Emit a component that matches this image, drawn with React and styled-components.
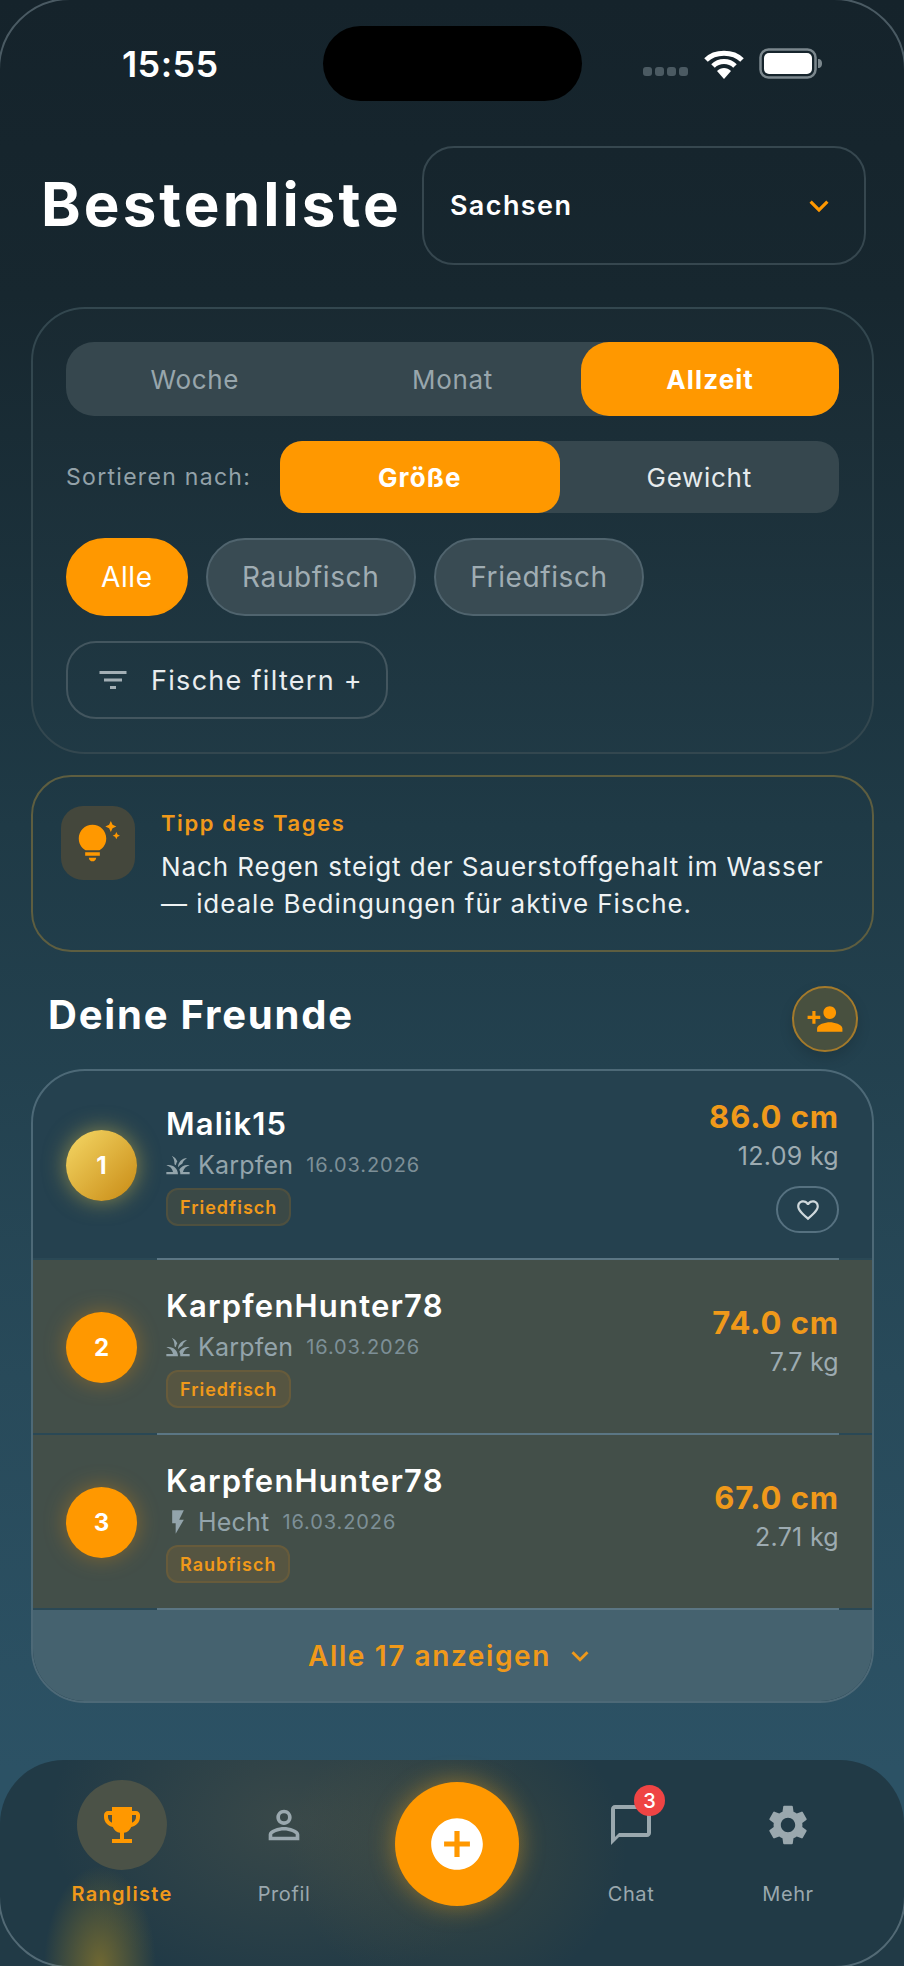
import React from "react";
import styled, { createGlobalStyle } from "styled-components";
import {
  MdAddCircle,
  MdChatBubbleOutline,
  MdEmojiEvents,
  MdFavoriteBorder,
  MdFilterList,
  MdFlashOn,
  MdGrass,
  MdKeyboardArrowDown,
  MdPersonAddAlt1,
  MdPersonOutline,
  MdSettings,
  MdTipsAndUpdates,
} from "react-icons/md";

const ORANGE = "#ff9800";

const friends = [
  { rank: 1, name: "Malik15", Icon: MdGrass, fish: "Karpfen", date: "16.03.2026", tag: "Friedfisch", size: "86.0 cm", weight: "12.09 kg", first: true },
  { rank: 2, name: "KarpfenHunter78", Icon: MdGrass, fish: "Karpfen", date: "16.03.2026", tag: "Friedfisch", size: "74.0 cm", weight: "7.7 kg" },
  { rank: 3, name: "KarpfenHunter78", Icon: MdFlashOn, fish: "Hecht", date: "16.03.2026", tag: "Raubfisch", size: "67.0 cm", weight: "2.71 kg" },
];

const GlobalStyle = createGlobalStyle`
  html, body {
    margin: 0;
    padding: 0;
  }
  body {
    background: #15232b;
    font-family: Inter, "Noto Sans", sans-serif;
    color: #fff;
  }
  * {
    box-sizing: border-box;
  }
`;

const Phone = styled.div`
  position: relative;
  width: 904px;
  height: 1966px;
  overflow: hidden;
  background: linear-gradient(180deg, #15232b 0%, #17272f 15%, #1f3a46 42%, #284a5a 70%, #2c5265 90%);

  &::after {
    content: "";
    position: absolute;
    inset: -2px;
    border: 2px solid rgba(200, 220, 230, 0.3);
    border-radius: 72px;
    pointer-events: none;
  }
`;

const StatusBar = styled.div`
  display: grid;
  grid-template-columns: 323px 259px 1fr;
  align-items: center;
  height: 75px;
  margin-top: 26px;
`;

const Time = styled.div`
  padding-left: 122px;
  font-size: 36px;
  font-weight: 600;
  letter-spacing: 0.4px;
`;

const Island = styled.div`
  height: 75px;
  border-radius: 38px;
  background: #000;
`;

const StatusIcons = styled.div`
  display: flex;
  align-items: center;
  padding-left: 61px;
`;

const SignalDot = styled.span`
  width: 9px;
  height: 9px;
  margin-right: 3px;
  margin-top: 16px;
  border-radius: 3px;
  background: #4b5a62;
`;

const Wifi = styled.svg`
  width: 42px;
  height: 32px;
  margin: 0 14px 0 12px;
`;

const Battery = styled.svg`
  width: 64px;
  height: 31px;
`;

const Header = styled.div`
  display: flex;
  align-items: center;
  gap: 20px;
  margin-top: 45px;
  padding: 0 38px 0 41px;
`;

const Title = styled.h1`
  margin: 0 0 4px;
  font-size: 60px;
  font-weight: 700;
  letter-spacing: 3.1px;
  white-space: nowrap;
`;

const Select = styled.div`
  flex: 1;
  display: flex;
  align-items: center;
  justify-content: space-between;
  height: 119px;
  padding: 0 26px 0 26px;
  border: 2px solid #36474f;
  border-radius: 32px;
  font-size: 27px;
  font-weight: 600;
  letter-spacing: 1.4px;
`;

const Main = styled.main`
  display: flex;
  flex-direction: column;
  margin-top: 42px;
  padding: 0 30px 0 31px;
`;

const FilterCard = styled.section`
  display: flex;
  flex-direction: column;
  align-items: flex-start;
  height: 447px;
  padding: 33px 33px 0;
  border: 2px solid #33474f;
  border-radius: 54px;
  background: rgba(255, 255, 255, 0.012);
`;

const Segment = styled.div`
  display: flex;
  flex: ${(p) => (p.$grow ? 1 : "none")};
  width: 100%;
  height: ${(p) => p.$height}px;
  border-radius: ${(p) => p.$radius}px;
  background: #36474e;
`;

const SegmentOption = styled.div`
  flex: 1;
  display: flex;
  align-items: center;
  justify-content: center;
  border-radius: inherit;
  font-size: 26px;
  letter-spacing: ${(p) => (p.$active ? 1.1 : 0.7)}px;
  font-weight: ${(p) => (p.$active ? 700 : 400)};
  color: ${(p) => (p.$active ? "#fff" : p.$muted ? "#98a6ac" : "#e6ebed")};
  background: ${(p) => (p.$active ? ORANGE : "transparent")};
`;

const SortRow = styled.div`
  display: flex;
  align-items: center;
  width: 100%;
  margin-top: 25px;
`;

const SortLabel = styled.span`
  width: 214px;
  font-size: 23px;
  letter-spacing: 1.3px;
  color: #93a2a9;
  white-space: nowrap;
`;

const ChipRow = styled.div`
  display: flex;
  gap: 18px;
  margin-top: 25px;
`;

const Chip = styled.div`
  display: flex;
  align-items: center;
  height: 78px;
  padding: 0 ${(p) => (p.$active ? 33 : 34.5)}px;
  border-radius: 39px;
  border: 2px solid ${(p) => (p.$active ? ORANGE : "#50646e")};
  background: ${(p) => (p.$active ? ORANGE : "#394b53")};
  color: ${(p) => (p.$active ? "#fff" : "#a0adb3")};
  font-size: 28px;
  letter-spacing: 0.6px;
`;

const FilterButton = styled.div`
  display: flex;
  align-items: center;
  gap: 20px;
  height: 78px;
  margin-top: 25px;
  padding: 0 23px 0 27px;
  border: 2px solid #43565f;
  border-radius: 30px;
  font-size: 27px;
  letter-spacing: 1.3px;
  color: #e9edef;

  svg {
    color: #a3afb5;
  }
`;

const TipCard = styled.section`
  display: flex;
  gap: 26px;
  height: 177px;
  margin-top: 21px;
  padding: 29px 28px;
  border: 2px solid #5e5e40;
  border-radius: 40px;
`;

const TipIcon = styled.div`
  flex: none;
  display: flex;
  align-items: center;
  justify-content: center;
  width: 74px;
  height: 74px;
  border-radius: 22px;
  background: #44473c;
  color: ${ORANGE};
`;

const TipTitle = styled.div`
  margin-top: 2px;
  font-size: 22px;
  font-weight: 600;
  letter-spacing: 1.6px;
  line-height: 30px;
  color: #f0991a;
`;

const TipText = styled.p`
  margin: 10px 0 0;
  font-size: 26px;
  letter-spacing: 0.92px;
  line-height: 37px;
  color: #eef2f3;
  white-space: nowrap;
`;

const SectionHead = styled.div`
  display: flex;
  align-items: center;
  justify-content: space-between;
  height: 66px;
  margin-top: 34px;
  padding: 0 16px 0 17px;
`;

const SectionTitle = styled.h2`
  margin: 0 0 10px;
  font-size: 40px;
  font-weight: 700;
  letter-spacing: 1.8px;
`;

const AddFriend = styled.div`
  display: flex;
  align-items: center;
  justify-content: center;
  width: 66px;
  height: 66px;
  border: 2px solid #a47a2b;
  border-radius: 50%;
  background: #48503f;
  color: ${ORANGE};
  box-shadow: 0 6px 14px rgba(0, 0, 0, 0.14);

  svg {
    transform: scaleX(-1);
  }
`;

const FriendsCard = styled.section`
  margin-top: 17px;
  overflow: hidden;
  border: 2px solid #4d6977;
  border-radius: 54px;
  background: #25414f;
`;

const Row = styled.div`
  display: flex;
  align-items: center;
  padding: ${(p) => (p.$first ? "27px 33px 25px" : "27px 33px 25px")};
  background: ${(p) => (p.$first ? "transparent" : "#434f49")};
`;

const RankBadge = styled.div`
  flex: none;
  display: flex;
  align-items: center;
  justify-content: center;
  width: 71px;
  height: 71px;
  border-radius: 50%;
  font-size: 24px;
  font-weight: 700;
  background: ${(p) => (p.$gold ? "linear-gradient(135deg, #f5d866, #c88a14)" : ORANGE)};
  box-shadow: 0 0 22px ${(p) => (p.$gold ? "rgba(240, 205, 70, 0.5)" : "rgba(255, 152, 0, 0.35)")};
`;

const Info = styled.div`
  flex: 1;
  display: flex;
  flex-direction: column;
  align-items: flex-start;
  padding-left: 29px;
`;

const Name = styled.div`
  font-size: 31px;
  font-weight: 600;
  letter-spacing: 1.2px;
  line-height: 38px;
`;

const Species = styled.div`
  display: flex;
  align-items: center;
  height: 34px;
  margin-top: 5px;
  color: #93a4ab;

  svg {
    margin: 0 6px 0 -2px;
  }
`;

const FishName = styled.span`
  font-size: 25px;
  letter-spacing: 0.2px;
`;

const FishDate = styled.span`
  margin-left: 13px;
  font-size: 20px;
  letter-spacing: 0.9px;
  color: #7d8f97;
`;

const Tag = styled.span`
  display: flex;
  align-items: center;
  height: 38px;
  margin-top: 6px;
  padding: 0 12px;
  border: 2px solid rgba(255, 152, 0, 0.1);
  border-radius: 12px;
  background: rgba(255, 152, 0, 0.1);
  color: #f0991a;
  font-size: 18px;
  font-weight: 600;
  letter-spacing: 1px;
`;

const Result = styled.div`
  display: flex;
  flex-direction: column;
  align-items: flex-end;
  padding-bottom: ${(p) => (p.$first ? 0 : 12)}px;
`;

const Size = styled.div`
  font-size: 31px;
  font-weight: 700;
  letter-spacing: 0.9px;
  line-height: 38px;
  color: #f0991a;
`;

const Weight = styled.div`
  margin-top: 3px;
  font-size: 25px;
  letter-spacing: 0.3px;
  line-height: 34px;
  color: #9dabb1;
`;

const LikeButton = styled.div`
  display: flex;
  align-items: center;
  justify-content: center;
  width: 63px;
  height: 47px;
  margin-top: 13px;
  border: 2px solid #567180;
  border-radius: 24px;
  color: #cfd8dc;
`;

const Divider = styled.div`
  height: 2px;
  background: linear-gradient(90deg, #2a4855 124px, #5b7684 124px, #5b7684 calc(100% - 33px), #2a4855 calc(100% - 33px));
`;

const ShowAll = styled.div`
  display: flex;
  align-items: center;
  justify-content: center;
  gap: 12px;
  height: 91px;
  background: #45626f;
  color: #f0991a;
  font-size: 28px;
  font-weight: 600;
  letter-spacing: 1.6px;
`;

const Nav = styled.nav`
  display: grid;
  grid-template-columns: 162px 162px 184px 164px 150px;
  height: 206px;
  margin-top: 57px;
  padding: 0 41px;
  border-radius: 64px 64px 0 0;
  background:
    radial-gradient(ellipse 56px 100px at 100px 206px, rgba(190, 150, 30, 0.5), transparent),
    radial-gradient(ellipse 240px 170px at 290px 60px, rgba(120, 110, 80, 0.28), transparent),
    radial-gradient(ellipse 170px 150px at 457px 90px, rgba(150, 120, 50, 0.2), transparent),
    #213a46;
`;

const NavItem = styled.div`
  display: flex;
  flex-direction: column;
  align-items: center;
  padding-top: 20px;
`;

const NavIcon = styled.div`
  position: relative;
  display: flex;
  align-items: center;
  justify-content: center;
  width: 90px;
  height: 90px;
  border-radius: 50%;
  background: ${(p) => (p.$active ? "#4b5247" : "transparent")};
  color: ${(p) => (p.$active ? ORANGE : "#9aa8ae")};
`;

const NavLabel = styled.span`
  margin-top: 11px;
  font-size: 20px;
  line-height: 26px;
  letter-spacing: ${(p) => (p.$active ? 1.3 : 0.6)}px;
  font-weight: ${(p) => (p.$active ? 600 : 400)};
  color: ${(p) => (p.$active ? "#f0991a" : "#9aa8ae")};
`;

const Fab = styled.div`
  justify-self: center;
  display: flex;
  align-items: center;
  justify-content: center;
  width: 124px;
  height: 124px;
  margin-top: 22px;
  border-radius: 50%;
  background: ${ORANGE};
  color: #fff;
  box-shadow: 0 0 26px rgba(255, 170, 20, 0.45);
`;

const Badge = styled.span`
  position: absolute;
  top: 5px;
  right: 11px;
  display: flex;
  align-items: center;
  justify-content: center;
  width: 31px;
  height: 31px;
  border-radius: 50%;
  background: #ef4444;
  color: #fff;
  font-size: 20px;
  font-weight: 500;
`;

const App = () => {
  return (
    <>
      <GlobalStyle />
      <Phone>
        <StatusBar>
          <Time>15:55</Time>
          <Island />
          <StatusIcons>
            <SignalDot />
            <SignalDot />
            <SignalDot />
            <SignalDot />
            <Wifi viewBox="0 0 42 32">
              <path d="M3 12 C12 3 30 3 39 12" fill="none" stroke="#fff" strokeWidth="5" />
              <path d="M10 18 C16 12 26 12 32 18" fill="none" stroke="#fff" strokeWidth="5" />
              <path d="M14 23 C18 19 24 19 28 23 L21 31 Z" fill="#fff" />
            </Wifi>
            <Battery viewBox="0 0 64 31">
              <rect x="1.5" y="1.5" width="55" height="28" rx="8" fill="none" stroke="#7b878d" strokeWidth="2.5" />
              <rect x="5" y="5" width="48" height="21" rx="5" fill="#fff" />
              <path d="M59 11 C62 11 63 13 63 15.5 C63 18 62 20 59 20 Z" fill="#7b878d" />
            </Battery>
          </StatusIcons>
        </StatusBar>

        <Header>
          <Title>Bestenliste</Title>
          <Select>
            Sachsen
            <MdKeyboardArrowDown size={38} color={ORANGE} />
          </Select>
        </Header>

        <Main>
          <FilterCard>
            <Segment $height={74} $radius={28}>
              <SegmentOption $muted>Woche</SegmentOption>
              <SegmentOption $muted>Monat</SegmentOption>
              <SegmentOption $active>Allzeit</SegmentOption>
            </Segment>
            <SortRow>
              <SortLabel>Sortieren nach:</SortLabel>
              <Segment $grow $height={72} $radius={22}>
                <SegmentOption $active>Größe</SegmentOption>
                <SegmentOption>Gewicht</SegmentOption>
              </Segment>
            </SortRow>
            <ChipRow>
              <Chip $active>Alle</Chip>
              <Chip>Raubfisch</Chip>
              <Chip>Friedfisch</Chip>
            </ChipRow>
            <FilterButton>
              <MdFilterList size={36} />
              Fische filtern +
            </FilterButton>
          </FilterCard>

          <TipCard>
            <TipIcon>
              <MdTipsAndUpdates size={44} />
            </TipIcon>
            <div>
              <TipTitle>Tipp des Tages</TipTitle>
              <TipText>
                Nach Regen steigt der Sauerstoffgehalt im Wasser
                <br />— ideale Bedingungen für aktive Fische.
              </TipText>
            </div>
          </TipCard>

          <SectionHead>
            <SectionTitle>Deine Freunde</SectionTitle>
            <AddFriend>
              <MdPersonAddAlt1 size={38} />
            </AddFriend>
          </SectionHead>

          <FriendsCard>
            {friends.map((f) => (
              <React.Fragment key={f.rank}>
                <Row $first={f.first}>
                  <RankBadge $gold={f.first}>{f.rank}</RankBadge>
                  <Info>
                    <Name>{f.name}</Name>
                    <Species>
                      <f.Icon size={28} />
                      <FishName>{f.fish}</FishName>
                      <FishDate>{f.date}</FishDate>
                    </Species>
                    <Tag>{f.tag}</Tag>
                  </Info>
                  <Result $first={f.first}>
                    <Size>{f.size}</Size>
                    <Weight>{f.weight}</Weight>
                    {f.first && (
                      <LikeButton>
                        <MdFavoriteBorder size={26} />
                      </LikeButton>
                    )}
                  </Result>
                </Row>
                <Divider />
              </React.Fragment>
            ))}
            <ShowAll>
              Alle 17 anzeigen
              <MdKeyboardArrowDown size={34} />
            </ShowAll>
          </FriendsCard>
        </Main>

        <Nav>
          <NavItem>
            <NavIcon $active>
              <MdEmojiEvents size={48} />
            </NavIcon>
            <NavLabel $active>Rangliste</NavLabel>
          </NavItem>
          <NavItem>
            <NavIcon>
              <MdPersonOutline size={46} />
            </NavIcon>
            <NavLabel>Profil</NavLabel>
          </NavItem>
          <Fab>
            <MdAddCircle size={62} />
          </Fab>
          <NavItem>
            <NavIcon>
              <MdChatBubbleOutline size={48} />
              <Badge>3</Badge>
            </NavIcon>
            <NavLabel>Chat</NavLabel>
          </NavItem>
          <NavItem>
            <NavIcon>
              <MdSettings size={48} />
            </NavIcon>
            <NavLabel>Mehr</NavLabel>
          </NavItem>
        </Nav>
      </Phone>
    </>
  );
};

export default App;
